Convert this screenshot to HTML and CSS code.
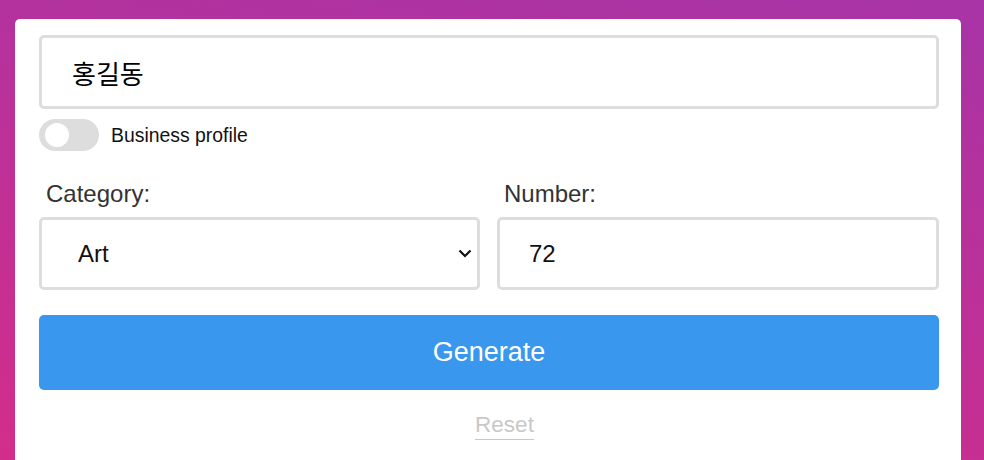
FILE: index.html
```html
<!DOCTYPE html>
<html lang="ko">
<head>
<meta charset="utf-8">
<title>Generator</title>
<link rel="stylesheet" href="styles.css">
</head>
<body>
<main class="card">
  <input class="field name-field" type="text" value="홍길동">
  <div class="toggle-row">
    <span class="toggle"><span class="knob"></span></span>
    <span class="toggle-label">Business profile</span>
  </div>
  <div class="grid">
    <div class="col">
      <label class="label">Category:</label>
      <div class="select-wrap">
        <select class="field select-field">
          <option>Art</option>
        </select>
        <svg class="chevron" width="14" height="9" viewBox="0 0 14 9"><path d="M1.5 1.5 L7 7 L12.5 1.5" fill="none" stroke="#111" stroke-width="2.2"/></svg>
      </div>
    </div>
    <div class="col">
      <label class="label">Number:</label>
      <input class="field number-field" type="text" value="72">
    </div>
  </div>
  <button class="generate">Generate</button>
  <div class="reset-row"><span class="reset">Reset</span></div>
</main>
</body>
</html>
```
FILE: styles.css
```css
html {
  overflow: hidden;
  height: 100%;
}
body {
  margin: 0;
  height: 100%;
  background: linear-gradient(190deg, #a734a6 0%, #d32d8a 100%);
  font-family: "Liberation Sans", Arial, "Noto Sans CJK KR", sans-serif;
}
.card {
  box-sizing: border-box;
  width: 946px;
  margin: 19px 0 0 15px;
  min-height: 600px;
  background: #fff;
  border-radius: 5px;
  padding: 16px 22px 0 24px;
  display: flex;
  flex-direction: column;
}
.field {
  box-sizing: border-box;
  width: 100%;
  border: 3px solid #dddddd;
  border-radius: 5px;
  background: #fff;
  font-family: "Liberation Sans", Arial, "Noto Sans CJK KR", sans-serif;
  font-size: 24px;
  color: #111;
  outline: none;
  margin: 0;
}
.name-field {
  height: 74px;
  padding: 0 0 0 30px;
  font-family: "Noto Sans CJK KR", "Liberation Sans", sans-serif;
  font-size: 26px;
  color: #000;
}
.toggle-row {
  display: flex;
  align-items: center;
  gap: 12px;
  margin-top: 10px;
  height: 32px;
}
.toggle {
  position: relative;
  width: 60px;
  height: 32px;
  border-radius: 16px;
  background: #dddddd;
  flex: none;
}
.knob {
  position: absolute;
  left: 6px;
  top: 4px;
  width: 24px;
  height: 24px;
  border-radius: 50%;
  background: #fff;
}
.toggle-label {
  font-size: 19.4px;
  color: #111;
}
.grid {
  display: grid;
  grid-template-columns: 441px 1fr;
  column-gap: 17px;
  margin-top: 29px;
}
.col {
  display: flex;
  flex-direction: column;
}
.label {
  font-size: 24px;
  color: #333;
  padding-left: 7px;
  line-height: 27px;
  margin-bottom: 10px;
}
.select-wrap {
  position: relative;
}
.select-field {
  height: 73px;
  padding: 0 0 0 36px;
  -webkit-appearance: none;
  appearance: none;
}
.chevron {
  position: absolute;
  right: 8px;
  top: 32px;
}
.number-field {
  height: 73px;
  padding: 0 0 0 29px;
}
.generate {
  margin-top: 25px;
  height: 75px;
  width: 100%;
  border: none;
  border-radius: 5px;
  background: #3a97ee;
  color: #fff;
  font-family: "Liberation Sans", Arial, sans-serif;
  font-size: 27px;
  padding: 0;
}
.reset-row {
  display: flex;
  justify-content: center;
  margin-top: 22px;
}
.reset {
  margin-left: 31px;
  font-size: 22.5px;
  color: #c8c8c8;
  padding-bottom: 2px;
  border-bottom: 1px solid #c8c8c8;
  line-height: 25px;
}
```
